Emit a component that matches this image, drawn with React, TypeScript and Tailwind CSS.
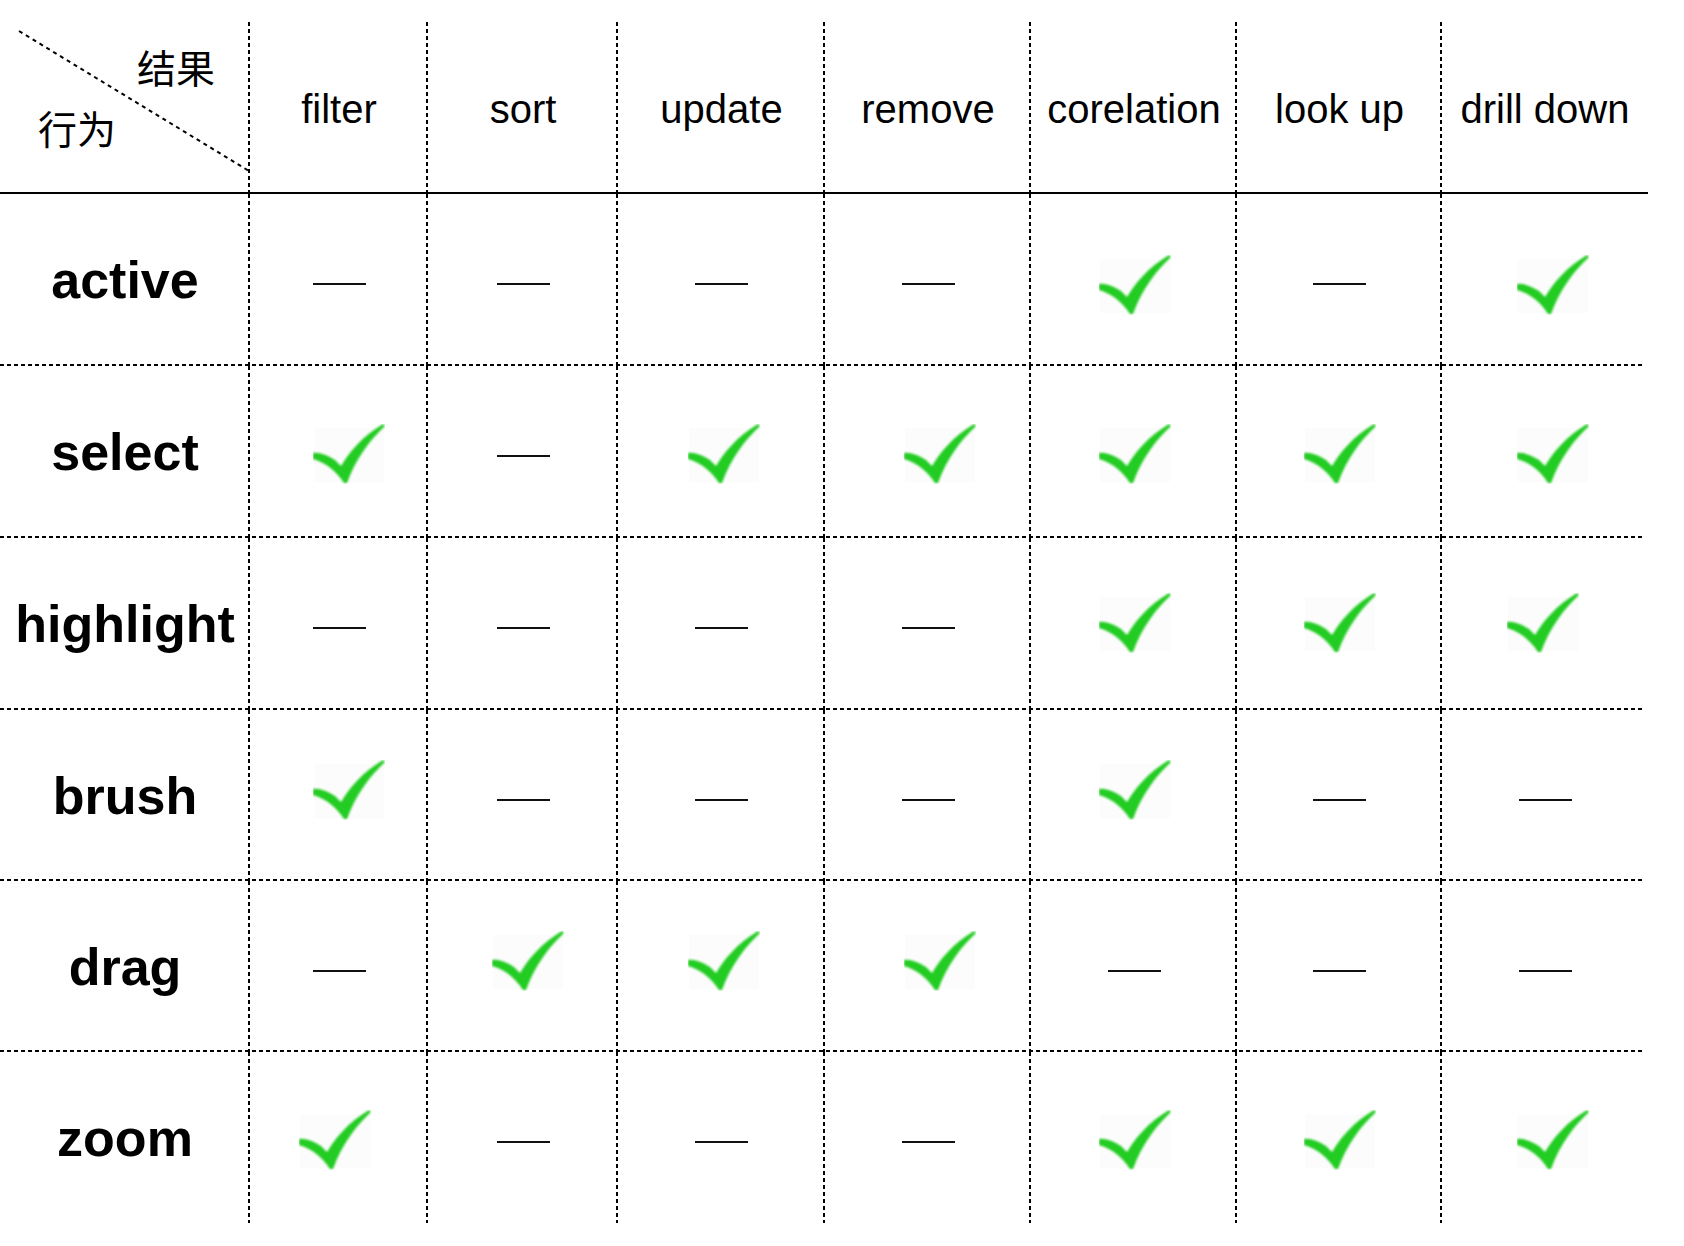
const cols = [
  { label: 'filter', w: 178 },
  { label: 'sort', w: 190 },
  { label: 'update', w: 207 },
  { label: 'remove', w: 206 },
  { label: 'corelation', w: 206 },
  { label: 'look up', w: 205 },
  { label: 'drill down', w: 206 },
];

// 1 = check, 0 = dash; dx nudges each check a little like the source image
const rows = [
  { label: 'active', h: 172, dy: 5, cells: [0, 0, 0, 0, 1, 0, 1], dx: [0, 0, 0, 0, 1, 0, 8] },
  { label: 'select', h: 172, dy: 2, cells: [1, 0, 1, 1, 1, 1, 1], dx: [10, 0, 2, 12, 1, 0, 8] },
  { label: 'highlight', h: 172, dy: -1, cells: [0, 0, 0, 0, 1, 1, 1], dx: [0, 0, 0, 0, 1, 0, -2] },
  { label: 'brush', h: 171, dy: -6, cells: [1, 0, 0, 0, 1, 0, 0], dx: [10, 0, 0, 0, 1, 0, 0] },
  { label: 'drag', h: 171, dy: -6, cells: [0, 1, 1, 1, 0, 0, 0], dx: [0, 5, 2, 12, 0, 0, 0] },
  { label: 'zoom', h: 171, dy: 2, cells: [1, 0, 0, 0, 1, 1, 1], dx: [-4, 0, 0, 0, 1, 0, 8] },
];

const vLine =
  '[background-image:repeating-linear-gradient(to_bottom,#000_0px,#000_4px,transparent_4px,transparent_7px)] [background-size:2px_100%] [background-position:right_top] bg-no-repeat';
const hLine =
  '[background-image:repeating-linear-gradient(to_right,#000_0px,#000_4px,transparent_4px,transparent_7px)] [background-size:1645px_2px] [background-position:left_bottom] bg-no-repeat';

function Check({ dx, dy }: { dx: number; dy: number }) {
  return (
    <svg
      width="72"
      height="60"
      viewBox="0 0 72 60"
      style={{ transform: `translate(${dx}px, ${dy}px)` }}
    >
      <defs>
        <filter id="soft" x="-10%" y="-10%" width="120%" height="120%">
          <feGaussianBlur stdDeviation="0.8" />
        </filter>
      </defs>
      <rect x="1" y="4" width="70" height="54" fill="#fcfcfc" />
      <path
        d="M0,29 C6,28 14,31 22,36 L28,42 C37,27 50,12 70,0 L72,2 C57,16 43,34 34,59 L31,59 C24,48 14,39 0,35 Z"
        fill="#22cc22"
        filter="url(#soft)"
      />
    </svg>
  );
}

function Dash() {
  return <div className="h-[2px] w-[53px] translate-y-[4px] bg-[#111]" />;
}

export default function App() {
  return (
    <div className="min-h-screen bg-white pt-[22px] font-['Liberation_Sans',Arial,sans-serif] text-black">
      <div className="w-[1648px]">
        {/* header row */}
        <div className="flex h-[172px] border-b-2 border-black">
          <div className={`relative w-[250px] shrink-0 ${vLine}`}>
            <svg className="absolute inset-0" width="250" height="170">
              <line x1="19" y1="9" x2="249" y2="149" stroke="#000" strokeWidth="2" strokeDasharray="4 4" />
            </svg>
            <span className="absolute left-[137px] top-[25px] font-['Noto_Sans_CJK_SC',sans-serif] text-[39px] leading-none">
              结果
            </span>
            <span className="absolute left-[38px] top-[86px] font-['Noto_Sans_CJK_SC',sans-serif] text-[39px] leading-none">
              行为
            </span>
          </div>
          {cols.map((c, i) => (
            <div
              key={c.label}
              style={{ width: c.w }}
              className={`flex shrink-0 items-center justify-center pt-[4px] text-[40px] leading-none ${i < cols.length - 1 ? vLine : ''}`}
            >
              {c.label}
            </div>
          ))}
        </div>

        {/* body rows */}
        {rows.map((r, ri) => (
          <div
            key={r.label}
            style={{ height: r.h }}
            className={`flex ${ri < rows.length - 1 ? hLine : ''}`}
          >
            <div className={`flex w-[250px] shrink-0 items-center justify-center text-[52px] font-bold leading-none ${vLine}`}>
              {r.label}
            </div>
            {cols.map((c, ci) => (
              <div
                key={c.label}
                style={{ width: c.w }}
                className={`flex shrink-0 items-center justify-center ${ci < cols.length - 1 ? vLine : ''}`}
              >
                {r.cells[ci] ? <Check dx={r.dx[ci]} dy={r.dy} /> : <Dash />}
              </div>
            ))}
          </div>
        ))}
      </div>
    </div>
  );
}
